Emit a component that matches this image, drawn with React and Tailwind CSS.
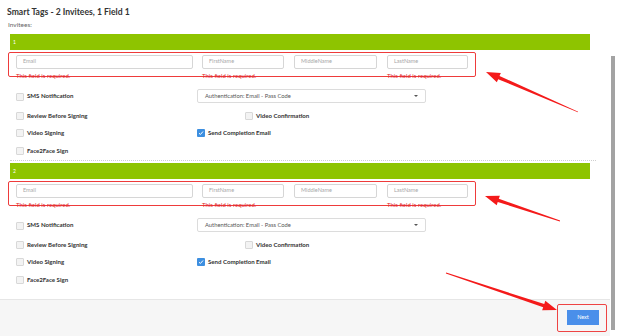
import React from "react";

function Checkbox({ checked }) {
  return checked ? (
    <span className="w-[8px] h-[8px] rounded-[1px] bg-[#3d8fe0] flex items-center justify-center shrink-0">
      <svg width="6" height="6" viewBox="0 0 6 6">
        <path d="M1 3.2 L2.4 4.5 L5 1.5" stroke="#fff" strokeWidth="1" fill="none" />
      </svg>
    </span>
  ) : (
    <span className="w-[8px] h-[8px] rounded-[1px] bg-[#f3f3f3] border border-[#d8d8d8] shrink-0" />
  );
}

function Check({ label, checked }) {
  return (
    <div className="flex items-center gap-[3px]">
      <Checkbox checked={checked} />
      <span className="text-[6.1px] font-bold text-[#333] leading-none">{label}</span>
    </div>
  );
}

function Field({ placeholder, w }) {
  return (
    <div className={`h-[14px] border border-[#d6d6d6] rounded-[2px] bg-white flex items-center px-[6px] ${w}`}>
      <span className="text-[5.5px] text-[#a8a8a8] leading-none">{placeholder}</span>
    </div>
  );
}

function Err({ w }) {
  return (
    <div className={`${w} h-[7px] text-[6px] leading-[13px] text-[#e0252b] whitespace-nowrap`}>
      This field is required.
    </div>
  );
}

function Invitee({ n }) {
  return (
    <div>
      <div className="h-[16px] mr-[6px] bg-[#8ec400] flex items-center pl-[3px]">
        <span className="text-[5px] text-white leading-none">{n}</span>
      </div>
      <div className="mt-[2px] -ml-[2px] w-[468px] h-[25px] border border-[#ee3b3b] rounded-[2px] pl-[7px] pt-[2px]">
        <div className="flex">
          <Field placeholder="Email" w="w-[177px]" />
          <div className="w-[9px]" />
          <Field placeholder="FirstName" w="w-[82px]" />
          <div className="w-[10px]" />
          <Field placeholder="MiddleName" w="w-[83px]" />
          <div className="w-[10px]" />
          <Field placeholder="LastName" w="w-[81px]" />
        </div>
        <div className="flex">
          <Err w="w-[186px]" />
          <Err w="w-[185px]" />
          <Err w="w-[81px]" />
        </div>
      </div>
      <div className="mt-[12px] pl-[6px]">
        <div className="flex items-center h-[14px]">
          <div className="w-[181px] pt-[1px]">
            <Check label="SMS Notification" />
          </div>
          <div className="w-[229px] h-[14px] border border-[#dcdcdc] rounded-[2px] flex items-center justify-between px-[7px]">
            <span className="text-[5.8px] text-[#555] leading-none">Authentication: Email - Pass Code</span>
            <span className="w-0 h-0 border-l-[2px] border-r-[2px] border-t-[2px] border-l-transparent border-r-transparent border-t-[#555]" />
          </div>
        </div>
        <div className="mt-[4px] flex items-center h-[17.5px]">
          <div className="w-[229px]">
            <Check label="Review Before Signing" />
          </div>
          <Check label="Video Confirmation" />
        </div>
        <div className="flex items-center h-[17.5px]">
          <div className="w-[181px]">
            <Check label="Video Signing" />
          </div>
          <Check label="Send Completion Email" checked />
        </div>
        <div className="flex items-center h-[17.5px]">
          <Check label="Face2Face Sign" />
        </div>
      </div>
    </div>
  );
}

function Arrow({ x1, y1, x2, y2 }) {
  const dx = x2 - x1;
  const dy = y2 - y1;
  const len = Math.hypot(dx, dy);
  const ux = dx / len;
  const uy = dy / len;
  const px = -uy;
  const py = ux;
  const headLen = 14;
  const headW = 5;
  const bx = x2 - ux * headLen;
  const by = y2 - uy * headLen;
  const pts = [
    [x1 + px * 0.4, y1 + py * 0.4],
    [bx + px * 1.7, by + py * 1.7],
    [bx + px * headW, by + py * headW],
    [x2, y2],
    [bx - px * headW, by - py * headW],
    [bx - px * 1.7, by - py * 1.7],
    [x1 - px * 0.4, y1 - py * 0.4],
  ]
    .map((p) => p.join(","))
    .join(" ");
  return <polygon points={pts} fill="#f41a1a" />;
}

export default function App() {
  return (
    <div className="relative w-[617px] h-[336px] bg-white overflow-hidden font-['Lato',sans-serif]">
      <div className="flex h-full">
        <div className="w-[610px] flex flex-col">
          <main className="flex-1 pl-[10px] pr-[14px]">
            <h1 className="-ml-[3px] pt-[6px] text-[8.6px] leading-[12px] font-bold text-[#333]">
              Smart Tags - 2 Invitees, 1 Field 1
            </h1>
            <div className="-ml-[2px] mt-[2px] text-[6.5px] leading-[9px] text-[#666]">Invitees:</div>
            <div className="mt-[5px]">
              <Invitee n="1" />
            </div>
            <div className="border-t border-dotted border-[#cfcfcf]" />
            <div className="mt-[2.5px]">
              <Invitee n="2" />
            </div>
          </main>
          <footer className="h-[37px] border-t border-[#e6e6e6] bg-[#f6f6f6] flex justify-end pr-[3px] pt-[4px]">
            <div className="h-[28px] border border-[#ee4444] rounded-[2px] pl-[9px] pr-[7px] pt-[5px]">
              <div className="w-[32px] h-[15px] bg-[#4a8fea] flex items-center justify-center">
                <span className="text-[5.5px] text-white leading-none">Next</span>
              </div>
            </div>
          </footer>
        </div>
        <div className="flex-1 pl-[1px] pt-[56px] pb-[6px]">
          <div className="w-[3.5px] h-full bg-[#a3a3a3]" />
        </div>
      </div>
      <svg className="absolute inset-0 pointer-events-none" width="617" height="336">
        <Arrow x1={578} y1={112} x2={486} y2={72} />
        <Arrow x1={560} y1={221} x2={485} y2={196} />
        <Arrow x1={446} y1={273} x2={557} y2={310} />
      </svg>
    </div>
  );
}
